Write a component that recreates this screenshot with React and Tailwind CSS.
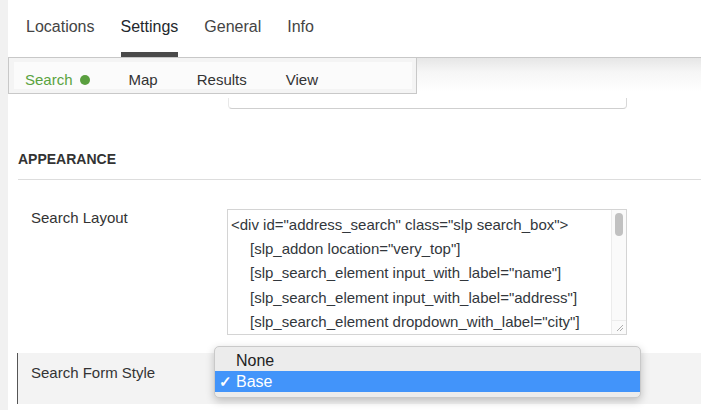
import React from "react";

const FONT = { fontFamily: '"Liberation Sans", Arial, Helvetica, sans-serif' };

function TopTab({ label, active }) {
  return (
    <div className="flex flex-col">
      <div
        className={
          "h-[52px] flex items-center text-[16px] leading-[20px] " +
          (active ? "text-[#23282d]" : "text-[#444]")
        }
      >
        <span className="pt-[1px]">{label}</span>
      </div>
      <div className={"h-[5px] " + (active ? "bg-[#4a4a4a]" : "")} />
    </div>
  );
}

function ScrollArrows() {
  return (
    <svg width="8" height="14" viewBox="0 0 8 14">
      <path d="M4 1 L7.5 5.5 L0.5 5.5 Z" fill="#333" />
      <path d="M4 13 L7.5 8.5 L0.5 8.5 Z" fill="#333" />
    </svg>
  );
}

export default function App() {
  const lines = [
    { t: '<div id="address_search" class="slp search_box">', indent: false },
    { t: '[slp_addon location="very_top"]', indent: true },
    { t: '[slp_search_element input_with_label="name"]', indent: true },
    { t: '[slp_search_element input_with_label="address"]', indent: true },
    { t: '[slp_search_element dropdown_with_label="city"]', indent: true },
  ];

  return (
    <div className="flex w-[701px] h-[410px] bg-white overflow-hidden" style={FONT}>
      <div className="w-[8px] shrink-0 bg-[#f1f1f1]" />
      <div className="flex-1 flex flex-col min-w-0">
        {/* Top tabs */}
        <div className="h-[58px] shrink-0 border-b border-[#c8c8c8] flex pl-[18px] gap-[26px] bg-white">
          <TopTab label="Locations" />
          <TopTab label="Settings" active />
          <TopTab label="General" />
          <TopTab label="Info" />
        </div>

        {/* Sub tabs area with shadow gradient */}
        <div className="bg-[linear-gradient(to_bottom,#e6e6e6,#f6f6f6_14px,#ffffff_34px)] flex flex-col">
          <div className="w-[409px] h-[36px] border-x border-b border-[#c8c8c8] bg-[#f4f4f4] p-[4px] pl-[5px]">
            <div className="h-full bg-[#fbfbfb] flex gap-[39px] pl-[11px] pt-[9px] text-[15px] leading-[18px] text-[#333]">
              <div className="flex items-center gap-[7px] text-[#5aa33f]">
                <span>Search</span>
                <span className="w-[10px] h-[10px] rounded-full bg-[#5a9f3f]" />
              </div>
              <span>Map</span>
              <span>Results</span>
              <span>View</span>
            </div>
          </div>
          <div className="mt-[4px] ml-[220px] w-[399px] h-[11px] border-x border-b border-[#cfcfcf] rounded-b-[4px] border-l-[#e8e8e8] border-r-[#d8d8d8]" />
        </div>

        {/* Appearance heading */}
        <div className="pl-[10px] mt-[42px] text-[14px] leading-[16px] font-bold text-[#333]">
          APPEARANCE
        </div>
        <div className="ml-[10px] mt-[12px] h-px bg-[#dddddd]" />

        {/* Search Layout row */}
        <div className="flex mt-[29px]">
          <div className="w-[219px] shrink-0 pl-[23px] text-[15px] leading-[18px] text-[#333]">
            Search Layout
          </div>
          <div className="relative w-[400px] h-[126px] border border-[#d4d4d4] bg-white overflow-hidden flex">
            <div className="flex-1 pt-[3px] pl-[3px] text-[15px] leading-[24.2px] text-[#32373c] whitespace-nowrap overflow-hidden">
              {lines.map((l, i) => (
                <div key={i} className={l.indent ? "pl-[19px]" : ""}>
                  {l.t}
                </div>
              ))}
            </div>
            <div className="w-[15px] shrink-0 border-l border-[#ececec] bg-[#fafafa] flex flex-col items-center pt-[3px]">
              <div className="w-[8px] h-[23px] rounded-full bg-[#c1c1c1]" />
              <div className="mt-auto w-full h-[14px] border-t border-[#ececec] flex items-end justify-end p-[2px]">
                <svg width="8" height="8" viewBox="0 0 8 8">
                  <path d="M1 7 L7 1 M4 7 L7 4" stroke="#999" strokeWidth="0.8" />
                </svg>
              </div>
            </div>
          </div>
        </div>

        {/* Search Form Style row */}
        <div className="mt-[18px] ml-[9px] h-[51px] border-l border-[#555] bg-[#f3f3f3] flex">
          <div className="w-[209px] shrink-0 pl-[13px] pt-[11px] text-[15px] leading-[18px] text-[#333]">
            Search Form Style
          </div>
          <div className="relative mt-[11px] w-[400px] h-[29px] rounded-[4px] border border-[#cccccc] bg-[#f6f6f6] flex items-center justify-end pr-[4px]">
            <ScrollArrows />
            {/* Dropdown popup */}
            <div className="absolute left-[-14px] top-[-19px] w-[427px] h-[52px] rounded-[5px] bg-[#ececec] border border-[#c9c9c9] shadow-[0_3px_8px_rgba(0,0,0,0.22)] pt-[3px] text-[16px] leading-[20px]">
              <div className="h-[21px] pl-[21px] flex items-center text-[#222]">None</div>
              <div className="h-[21px] bg-[#4294fa] text-white flex items-center">
                <span className="w-[21px] pl-[4px] text-[15px] font-bold">✓</span>
                <span>Base</span>
              </div>
            </div>
          </div>
        </div>
      </div>
    </div>
  );
}
